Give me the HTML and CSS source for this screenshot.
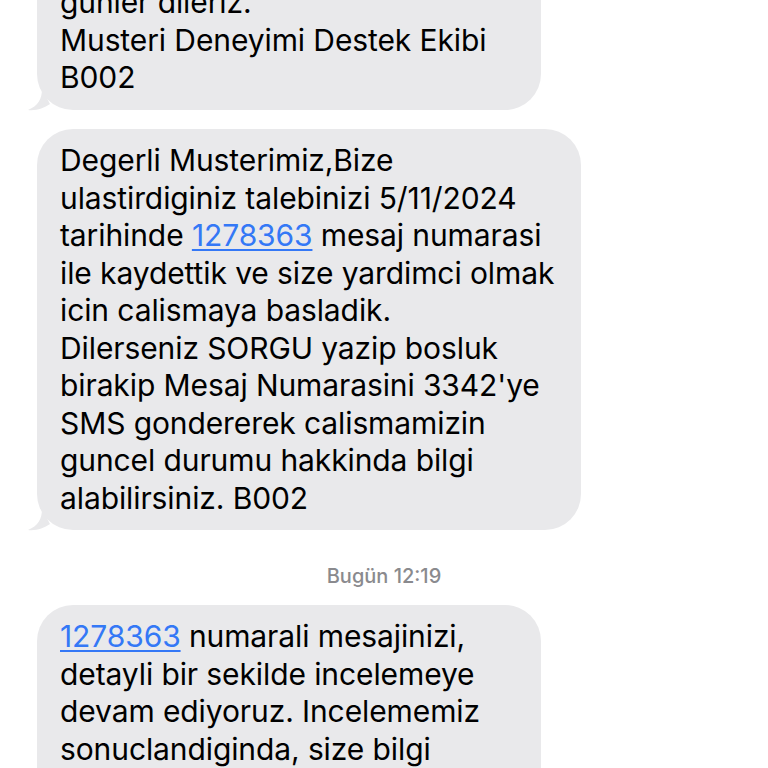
FILE: index.html
```html
<!DOCTYPE html>
<html lang="tr">
<head>
<meta charset="utf-8">
<link rel="stylesheet" href="styles.css">
</head>
<body>
<div class="thread">
  <div class="msg">
    <div class="bubble b1">gunler dileriz.<br>Musteri Deneyimi Destek Ekibi<br>B002</div>
    <svg class="tail" width="24" height="22" viewBox="0 0 24 22"><path d="M14 0 C14 10 10 17 0 21 C8 22 16 19 22 15 Z" fill="#e9e9eb"/></svg>
  </div>
  <div class="msg">
    <div class="bubble b2">Degerli Musterimiz,Bize<br>ulastirdiginiz talebinizi 5/11/2024<br>tarihinde <span class="link">1278363</span> mesaj numarasi<br>ile kaydettik ve size yardimci olmak<br>icin calismaya basladik.<br>Dilerseniz SORGU yazip bosluk<br>birakip Mesaj Numarasini 3342'ye<br>SMS gondererek calismamizin<br>guncel durumu hakkinda bilgi<br>alabilirsiniz. B002</div>
    <svg class="tail" width="24" height="22" viewBox="0 0 24 22"><path d="M14 0 C14 10 10 17 0 21 C8 22 16 19 22 15 Z" fill="#e9e9eb"/></svg>
  </div>
  <div class="stamp">Bugün 12:19</div>
  <div class="msg">
    <div class="bubble b3"><span class="link">1278363</span> numarali mesajinizi,<br>detayli bir sekilde incelemeye<br>devam ediyoruz. Incelememiz<br>sonuclandiginda, size bilgi<br>verecegiz.</div>
  </div>
</div>
</body>
</html>
```
FILE: styles.css
```css
html, body {
  margin: 0;
  padding: 0;
  background: #ffffff;
  overflow: hidden;
}
body {
  width: 768px;
  height: 768px;
  font-family: Inter, "Liberation Sans", sans-serif;
}
.thread {
  display: flex;
  flex-direction: column;
  align-items: flex-start;
  padding-left: 37px;
  margin-top: -62px;
}
.msg {
  position: relative;
}
.bubble {
  background: #e9e9eb;
  color: #000000;
  font-size: 30px;
  letter-spacing: -0.1px;
  line-height: 37.5px;
  padding: 13px 23px 13px 23px;
  border-radius: 36px;
  box-sizing: border-box;
  white-space: nowrap;
}
.b1 { width: 504px; height: 172px; padding-top: 46px; }
.b2 { width: 544px; margin-top: 19px; }
.b3 { width: 504px; }
.link {
  color: #3478f6;
  text-decoration: underline;
  text-decoration-thickness: 1.5px;
  text-underline-offset: 3px;
}
.tail {
  position: absolute;
  left: -9px;
  bottom: -1px;
}
.stamp {
  align-self: stretch;
  text-align: center;
  margin-left: -37px;
  color: #8a8a8e;
  font-size: 20px;
  font-weight: 500;
  line-height: 24px;
  padding: 34px 0 17px 0;
}
```
